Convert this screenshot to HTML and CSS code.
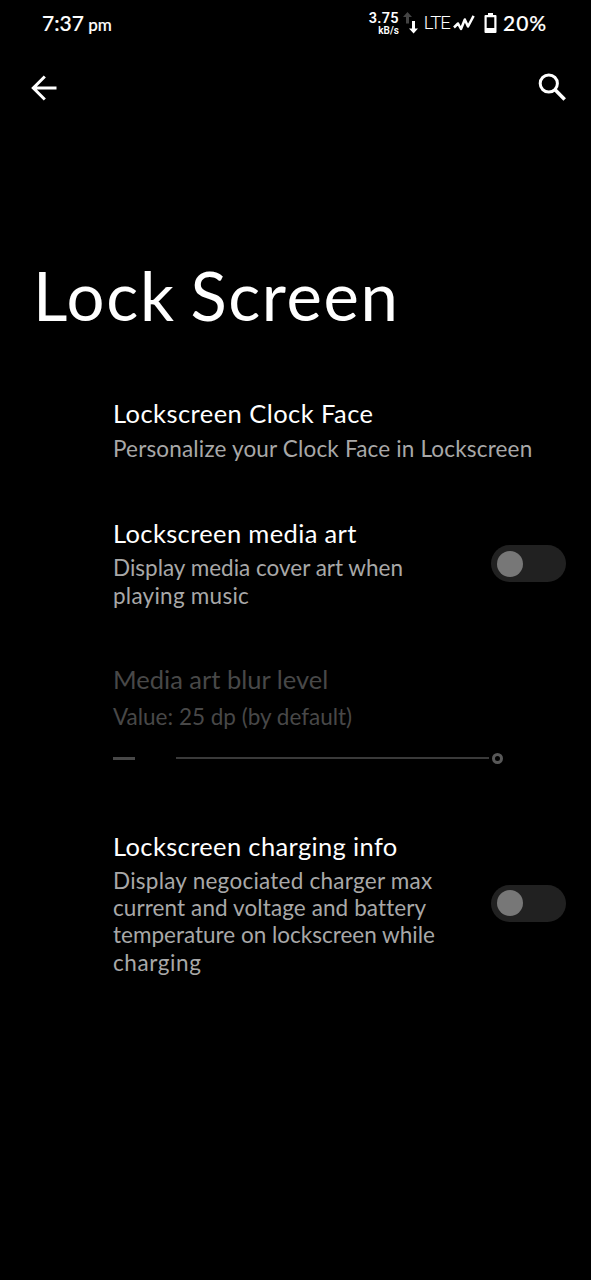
FILE: index.html
```
<!DOCTYPE html>
<html lang="en">
<head>
<meta charset="utf-8">
<title>Lock Screen</title>
<link rel="stylesheet" href="styles.css">
</head>
<body>
<header class="status">
  <div class="clock">7:37 <span class="meridiem">pm</span></div>
  <div class="indicators">
    <div class="speed"><span class="rate">3.75</span><span class="unit">kB/s</span></div>
    <svg class="traffic" width="15" height="22" viewBox="0 0 15 22">
      <path fill="#444" d="M4.500 0 9 5H6v6.500H3V5H0z"/>
      <path fill="#fff" d="M9 9h3v7.500h3L10.600 21.500 6 16.500h3z"/>
    </svg>
    <span class="network">LTE</span>
    <svg class="signal" width="22" height="16" viewBox="0 0 22 16">
      <path fill="none" stroke="#fff" stroke-width="2.500" stroke-linejoin="round" d="M1 12.500 5 8.500 8 14 11.800 4.500 15 11.500 20.600 0.800"/>
    </svg>
    <svg class="battery" width="13" height="20" viewBox="0 0 13 20">
      <path fill="#fff" fill-rule="evenodd" d="M4 0h5v2h2.500q1 0 1 1v16q0 1-1 1H1.500q-1 0-1-1V3q0-1 1-1H4zM2.700 4.200v10.800h7.600V4.200z"/>
    </svg>
    <span class="percent">20%</span>
  </div>
</header>
<nav class="toolbar">
  <svg width="26" height="26" viewBox="0 0 26 26"><path fill="none" stroke="#fff" stroke-width="3" d="M25.500 13H3M13.800 1.500 2.300 13l11.500 11.500"/></svg>
  <svg width="28" height="29" viewBox="0 0 28 29"><circle cx="10.800" cy="10.500" r="8.600" fill="none" stroke="#fff" stroke-width="3"/><path stroke="#fff" stroke-width="3.600" d="M16.600 16.300 26.700 26.400"/></svg>
</nav>
<h1 class="heading">Lock Screen</h1>
<main class="list">
  <section class="item item-face">
    <div class="copy">
      <h2 class="title track-5">Lockscreen Clock Face</h2>
      <p class="summary"><span class="line track-2">Personalize your Clock Face in Lockscreen</span></p>
    </div>
  </section>
  <section class="item item-art">
    <div class="copy">
      <h2 class="title track-4">Lockscreen media art</h2>
      <p class="summary"><span class="line">Display media cover art when</span><span class="line track-3">playing music</span></p>
    </div>
    <div class="switch"><div class="thumb"></div></div>
  </section>
  <section class="item item-blur">
    <div class="copy">
      <h2 class="title">Media art blur level</h2>
      <p class="summary"><span class="line">Value: 25 dp (by default)</span></p>
      <div class="slider"><span class="minus"></span><span class="rail"></span><span class="knob"></span></div>
    </div>
  </section>
  <section class="item item-charging">
    <div class="copy">
      <h2 class="title track-4">Lockscreen charging info</h2>
      <p class="summary"><span class="line track-3">Display negociated charger max</span><span class="line track-1">current and voltage and battery</span><span class="line">temperature on lockscreen while</span><span class="line track-6">charging</span></p>
    </div>
    <div class="switch"><div class="thumb"></div></div>
  </section>
</main>
</body>
</html>
```
FILE: styles.css
```
* { box-sizing: border-box; }
body {
  margin: 0;
  height: 1280px;
  overflow: hidden;
  background: #000;
  color: #fff;
  font-family: Lato, "Open Sans", sans-serif;
}
h1, h2, p { margin: 0; font-weight: 400; }
svg { display: block; flex: none; }

.status {
  display: flex;
  justify-content: space-between;
  height: 46px;
  padding: 0 42px 0 42px;
  line-height: 46px;
  white-space: nowrap;
}
.clock { font-size: 21px; font-weight: 500; -webkit-text-stroke: 0.15px #fff; }
.meridiem { margin-left: -1px; font-size: 17px; }
.indicators { display: flex; align-items: flex-start; }
.speed {
  display: flex;
  flex-direction: column;
  align-items: flex-end;
  padding-top: 12px;
  font-family: Roboto, sans-serif;
  font-weight: 600;
}
.rate { font-size: 14.5px; line-height: 13px; letter-spacing: 0.3px; }
.unit { font-size: 10px; line-height: 11px; }
.traffic { margin: 12px 0 0 4px; }
.network {
  margin-left: 6px;
  font-family: Roboto, sans-serif;
  font-size: 18.5px;
  font-weight: 300;
  letter-spacing: -0.9px;
}
.signal { margin: 15px 0 0 3px; }
.battery { margin: 13px 0 0 9px; }
.percent {
  width: 46px;
  margin-left: 6px;
  font-size: 21px;
  font-weight: 500;
  letter-spacing: 1px;
  -webkit-text-stroke: 0.15px #fff;
}

.toolbar {
  display: flex;
  justify-content: space-between;
  align-items: center;
  height: 83px;
  padding: 0 25px 0 31px;
}
.heading {
  margin: 126px 0 0 33px;
  font-size: 67px;
  line-height: 80px;
  letter-spacing: 1.65px;
  word-spacing: -4px;
}
.list { margin-top: 63px; padding-left: 113px; }
.item {
  display: flex;
  justify-content: space-between;
  align-items: center;
  padding-right: 25px;
}
.item-art { margin-top: 56px; }
.item-blur { margin-top: 55px; color: #484848; }
.item-charging { margin-top: 67px; }
.title { font-size: 25.5px; line-height: 30px; white-space: nowrap; }
.summary { margin-top: 6px; color: #a8a8a8; font-size: 22.5px; line-height: 27.4px; }
.item-face .summary { margin-top: 7px; }
.item-blur .summary { margin-top: 9px; color: inherit; }
.line { display: block; white-space: nowrap; }
.track-1 { letter-spacing: 0.1px; }
.track-2 { letter-spacing: 0.17px; }
.track-3 { letter-spacing: 0.25px; }
.track-4 { letter-spacing: 0.36px; }
.track-5 { letter-spacing: 0.44px; }
.track-6 { letter-spacing: 0.6px; }

.switch {
  display: flex;
  align-items: center;
  flex: none;
  width: 75px;
  height: 37px;
  padding-left: 6px;
  border-radius: 19px;
  background: #212121;
}
.thumb { width: 26px; height: 26px; border-radius: 50%; background: #777; }

.slider { display: flex; align-items: center; height: 11px; margin-top: 22px; }
.minus { width: 22px; height: 3px; background: #484848; }
.rail { width: 313px; height: 2px; margin-left: 41px; background: #3a3a3a; }
.knob { width: 11px; height: 11px; margin-left: 3px; border: 3px solid #585858; border-radius: 50%; }
```
